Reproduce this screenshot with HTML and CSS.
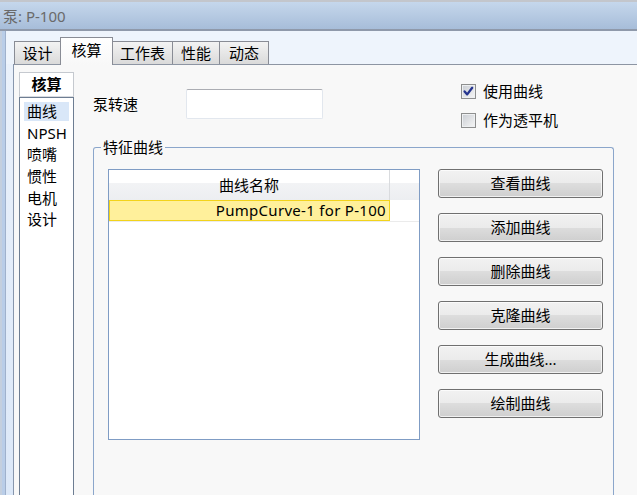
FILE: index.html
```html
<!DOCTYPE html>
<html lang="zh">
<head>
<meta charset="utf-8">
<title>泵: P-100</title>
<link rel="stylesheet" href="styles.css">
</head>
<body>
<div class="window">
  <div class="titlebar">泵: P-100</div>
  <div class="frame">
    <div class="frame-edge"></div>
    <div class="client">
      <div class="tabs">
        <div class="tab t1">设计</div>
        <div class="tab active t2">核算</div>
        <div class="tab t3">工作表</div>
        <div class="tab t4">性能</div>
        <div class="tab t5">动态</div>
      </div>
      <div class="pane-wrap">
        <div class="pane">
          <div class="side">
            <div class="side-head">核算</div>
            <ul class="side-list">
              <li class="sel">曲线</li>
              <li>NPSH</li>
              <li>喷嘴</li>
              <li>惯性</li>
              <li>电机</li>
              <li>设计</li>
            </ul>
          </div>
          <div class="main">
            <div class="top">
              <div class="speed">
                <span class="label">泵转速</span>
                <div class="input"></div>
              </div>
              <div class="checks">
                <div class="check">
                  <span class="box"><svg width="13" height="13" viewBox="0 0 13 13"><path d="M2.6 6.4 L5.2 9.4 L10.2 2.8" fill="none" stroke="#25348f" stroke-width="2.3" stroke-linecap="round" stroke-linejoin="round"/></svg></span>
                  <span>使用曲线</span>
                </div>
                <div class="check">
                  <span class="box"></span>
                  <span>作为透平机</span>
                </div>
              </div>
            </div>
            <fieldset class="group">
              <legend>特征曲线</legend>
              <div class="group-body">
                <div class="table">
                  <div class="thead">
                    <div class="th name">曲线名称</div>
                    <div class="th extra"></div>
                  </div>
                  <div class="row">
                    <div class="cell name selected">PumpCurve-1 for P-100</div>
                    <div class="cell extra"></div>
                  </div>
                </div>
                <div class="buttons">
                  <div class="btn">查看曲线</div>
                  <div class="btn">添加曲线</div>
                  <div class="btn">删除曲线</div>
                  <div class="btn">克隆曲线</div>
                  <div class="btn">生成曲线...</div>
                  <div class="btn">绘制曲线</div>
                </div>
              </div>
            </fieldset>
          </div>
        </div>
      </div>
    </div>
  </div>
</div>
</body>
</html>
```
FILE: styles.css
```css
html, body {
  margin: 0;
  padding: 0;
}
body {
  width: 637px;
  height: 495px;
  overflow: hidden;
  font-family: "Noto Sans", "Noto Sans CJK SC", sans-serif;
  font-size: 15px;
  color: #000;
  background: #f8f8f8;
}
.window {
  display: flex;
  flex-direction: column;
  height: 495px;
}
.titlebar {
  height: 26px;
  padding: 1px 0 0 3px;
  border-top: 2px solid #c3c6cc;
  border-bottom: 2px solid #8f99aa;
  background: linear-gradient(#c5d7ec, #a7bdd9);
  color: #6a6a6a;
  line-height: 26px;
}
.frame {
  flex: 1;
  display: flex;
  min-height: 0;
}
.frame-edge {
  width: 6px;
  flex: none;
  background: linear-gradient(to right, #c4cfde 0 2px, #b9cde8 2px 5px, #9fb1cc 5px 6px);
}
.client {
  flex: 1;
  display: flex;
  flex-direction: column;
  background: #eef4fc;
  min-width: 0;
}
.tabs {
  height: 33px;
  flex: none;
  display: flex;
  align-items: flex-end;
  padding-left: 8px;
  position: relative;
  z-index: 1;
}
.tab {
  box-sizing: border-box;
  height: 23px;
  margin-left: -1px;
  border: 1px solid #898c95;
  border-bottom: none;
  background: linear-gradient(#f3f3f3, #dadada);
  text-align: center;
  line-height: 22px;
}
.tab.t1 { margin-left: 0; width: 47px; }
.tab.t2 { width: 53px; }
.tab.t3 { width: 61px; }
.tab.t4 { width: 48px; }
.tab.t5 { width: 50px; }
.tab.active {
  height: 28px;
  margin-bottom: -1px;
  background: linear-gradient(#ffffff, #f8f8f8);
  line-height: 24px;
  position: relative;
  z-index: 2;
}
.pane-wrap {
  flex: 1;
  display: flex;
  padding-left: 7px;
  background: linear-gradient(#eaf1fb, #dce8f8);
  min-height: 0;
}
.pane {
  flex: 1;
  display: flex;
  border-left: 1px solid #8796ad;
  border-top: 1px solid #8d95a3;
  background: #f8f8f8;
  padding: 7px 0 0 5px;
  min-width: 0;
}
.side {
  width: 55px;
  flex: none;
  display: flex;
  flex-direction: column;
}
.side-head {
  box-sizing: border-box;
  height: 25px;
  border: 1px solid #c5c9cf;
  border-bottom-color: #d8dbe0;
  background: #fff;
  text-align: center;
  font-weight: bold;
  line-height: 23px;
}
.side-list {
  flex: 1;
  margin: 0;
  padding: 4px 4px 0;
  list-style: none;
  border: 1px solid #6d7d92;
  border-bottom: none;
  background: #fff;
}
.side-list li {
  height: 19px;
  line-height: 19px;
  padding-left: 3px;
  margin-bottom: 2.67px;
  white-space: nowrap;
}
.side-list li.sel {
  background: #d9e7f8;
}
.main {
  flex: 1;
  padding-left: 19px;
  display: flex;
  flex-direction: column;
  min-width: 0;
}
.top {
  margin-top: 8px;
  height: 52px;
  flex: none;
  display: flex;
  align-items: flex-start;
}
.speed {
  display: flex;
  align-items: center;
  margin-top: 9px;
}
.speed .label {
  width: 93px;
  line-height: 20px;
}
.input {
  box-sizing: border-box;
  width: 137px;
  height: 30px;
  background: #fff;
  border: 1px solid #e2e7ee;
  border-top-color: #abadb3;
  border-radius: 2px;
}
.checks {
  margin-left: 138px;
  display: flex;
  flex-direction: column;
  gap: 7px;
}
.check {
  display: flex;
  align-items: center;
  gap: 7px;
  height: 22px;
  line-height: 22px;
  white-space: nowrap;
}
.box {
  box-sizing: border-box;
  width: 15px;
  height: 15px;
  border: 1px solid #8e8f8f;
  background: linear-gradient(135deg, #c9cdd3, #f6f6f6);
  box-shadow: inset 0 0 0 1px #eef0f2;
  display: flex;
  align-items: center;
  justify-content: center;
}
.box svg {
  display: block;
}
.group {
  box-sizing: border-box;
  width: 521px;
  flex: 1;
  min-height: 0;
  margin: 5px 0 0;
  padding: 0;
  border: 1px solid #8ba6cb;
  border-bottom: none;
  border-radius: 3px 3px 0 0;
  min-inline-size: 0;
}
.group legend {
  margin-left: 7px;
  padding: 0 2px;
  height: 20px;
  line-height: 20px;
}
.group-body {
  display: flex;
  align-items: flex-start;
  gap: 18px;
  padding: 12px 0 0 14px;
}
.table {
  box-sizing: border-box;
  width: 312px;
  height: 271px;
  flex: none;
  border: 1px solid #7f9cc4;
  background: #fff;
}
.thead {
  display: flex;
  height: 30px;
  background: linear-gradient(#ffffff 0, #ffffff 45%, #f2f3f5 45%, #eceef1 100%);
}
.th.name {
  box-sizing: border-box;
  width: 281px;
  border-right: 1px solid #d9dbde;
  text-align: center;
  line-height: 30px;
}
.th.extra {
  flex: 1;
}
.row {
  display: flex;
  height: 22px;
  box-sizing: border-box;
  border-bottom: 1px solid #ebebeb;
}
.cell.name {
  box-sizing: border-box;
  width: 281px;
  height: 21px;
}
.cell.selected {
  border: 1px solid #f2d31b;
  background: #fff09b;
  text-align: right;
  padding-right: 3px;
  line-height: 19px;
  letter-spacing: 0.3px;
  white-space: nowrap;
}
.cell.extra {
  flex: 1;
}
.buttons {
  display: flex;
  flex-direction: column;
  gap: 15px;
}
.btn {
  box-sizing: border-box;
  width: 165px;
  height: 29px;
  border: 1px solid #707070;
  border-radius: 3px;
  background: linear-gradient(#f2f2f2 0, #ebebeb 50%, #dddddd 50%, #cfcfcf 100%);
  box-shadow: inset 0 0 0 1px rgba(255, 255, 255, 0.7);
  text-align: center;
  line-height: 27px;
  white-space: nowrap;
}
```
